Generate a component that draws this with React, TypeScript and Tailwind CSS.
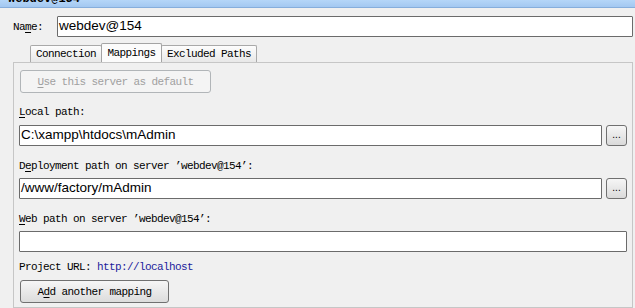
import React from 'react';

const monoBase = "font-['Liberation_Mono','DejaVu_Sans_Mono',monospace] text-[11px] tracking-[-0.6px] leading-[12px]";
const mono = `${monoBase} text-black`;
const sans = "font-['Liberation_Sans',Arial,sans-serif] text-[13.5px] text-black";

function Mn({ children }: { children: React.ReactNode }) {
  return <span className="underline underline-offset-[2px]">{children}</span>;
}

function TextField({ value, className = '' }: { value?: string; className?: string }) {
  return (
    <div
      className={`h-[21px] bg-white border border-[#6b6b6b] rounded-[1px] flex items-center pl-px overflow-hidden ${sans} ${className}`}
    >
      {value}
    </div>
  );
}

function BrowseButton() {
  return (
    <div className="w-[21px] h-[21px] shrink-0 rounded-[3px] border border-[#707070] bg-gradient-to-b from-[#f6f6f6] to-[#dadada] flex items-center justify-center">
      <span className="font-['Liberation_Sans',sans-serif] text-[10px] leading-none text-black -mt-[2px]">...</span>
    </div>
  );
}

function Tab({ label, active, width }: { label: string; active?: boolean; width: string }) {
  return (
    <div
      className={`${width} flex items-center justify-center border-l border-t border-r rounded-t-[2px] ${
        active
          ? 'h-[19px] bg-[#fbfbfb] border-[#a3a3a3] -mx-px z-10 relative'
          : 'h-[17px] bg-gradient-to-b from-[#fdfdfd] to-[#e8e8e8] border-[#a9a9a9]'
      }`}
    >
      <span className={mono}>{label}</span>
    </div>
  );
}

export default function App() {
  return (
    <div className="w-[635px] h-[308px] overflow-hidden bg-[#f0f0f0] flex flex-col">
      {/* window title strip, the title itself is mostly scrolled off */}
      <div className="h-[8px] shrink-0 overflow-hidden bg-gradient-to-b from-[#b5d6f8] to-[#a3c8f1] border-b border-[#86aedc] pl-[8px]">
        <div className="-mt-[7px] font-['Liberation_Mono',monospace] text-[12px] font-bold leading-[12px] text-black">
          webdev@154
        </div>
      </div>

      {/* name row */}
      <div className="flex items-center mt-[8px] pl-[13px] pr-[2px]">
        <span className={`${mono} w-[44px] shrink-0`}>
          Na<Mn>m</Mn>e:
        </span>
        <TextField value="webdev@154" className="flex-1 pl-[2px]" />
      </div>

      {/* tabs */}
      <div className="flex items-end mt-[6px] pl-[30px] h-[19px]">
        <Tab label="Connection" width="w-[72px]" />
        <Tab label="Mappings" width="w-[61px]" active />
        <Tab label="Excluded Paths" width="w-[96px]" />
      </div>

      {/* tab panel */}
      <div className="flex-1 ml-[13px] mr-[2px] border border-[#c6c6c6] bg-[#f0f0f0] pl-[5px] pr-[5px] flex flex-col">
        <div className="mt-[7px] ml-px w-[191px] h-[23px] rounded-[3px] border border-[#b1b5b8] bg-[#f4f4f4] flex items-center justify-center">
          <span className={`${monoBase} text-[#a0a0a0]`}>
            <Mn>U</Mn>se this server as default
          </span>
        </div>

        <div className={`${mono} mt-[13px]`}>
          <Mn>L</Mn>ocal path:
        </div>
        <div className="flex gap-[4px] mt-[7px]">
          <TextField value="C:\xampp\htdocs\mAdmin" className="flex-1" />
          <BrowseButton />
        </div>

        <div className={`${mono} mt-[14px]`}>
          D<Mn>e</Mn>ployment path on server ’webdev@154’:
        </div>
        <div className="flex gap-[4px] mt-[6px]">
          <TextField value="/www/factory/mAdmin" className="flex-1" />
          <BrowseButton />
        </div>

        <div className={`${mono} mt-[14px]`}>
          <Mn>W</Mn>eb path on server ’webdev@154’:
        </div>
        <TextField className="mt-[6px]" />

        <div className={`${mono} mt-[9px]`}>
          Project URL: <span className="text-[#1c1c9c]">http://localhost</span>
        </div>

        <div className="mt-[7px] ml-px w-[149px] h-[23px] rounded-[3px] border border-[#707070] bg-gradient-to-b from-[#f6f6f6] to-[#dcdcdc] flex items-center justify-center">
          <span className={mono}>
            A<Mn>d</Mn>d another mapping
          </span>
        </div>
      </div>
    </div>
  );
}
